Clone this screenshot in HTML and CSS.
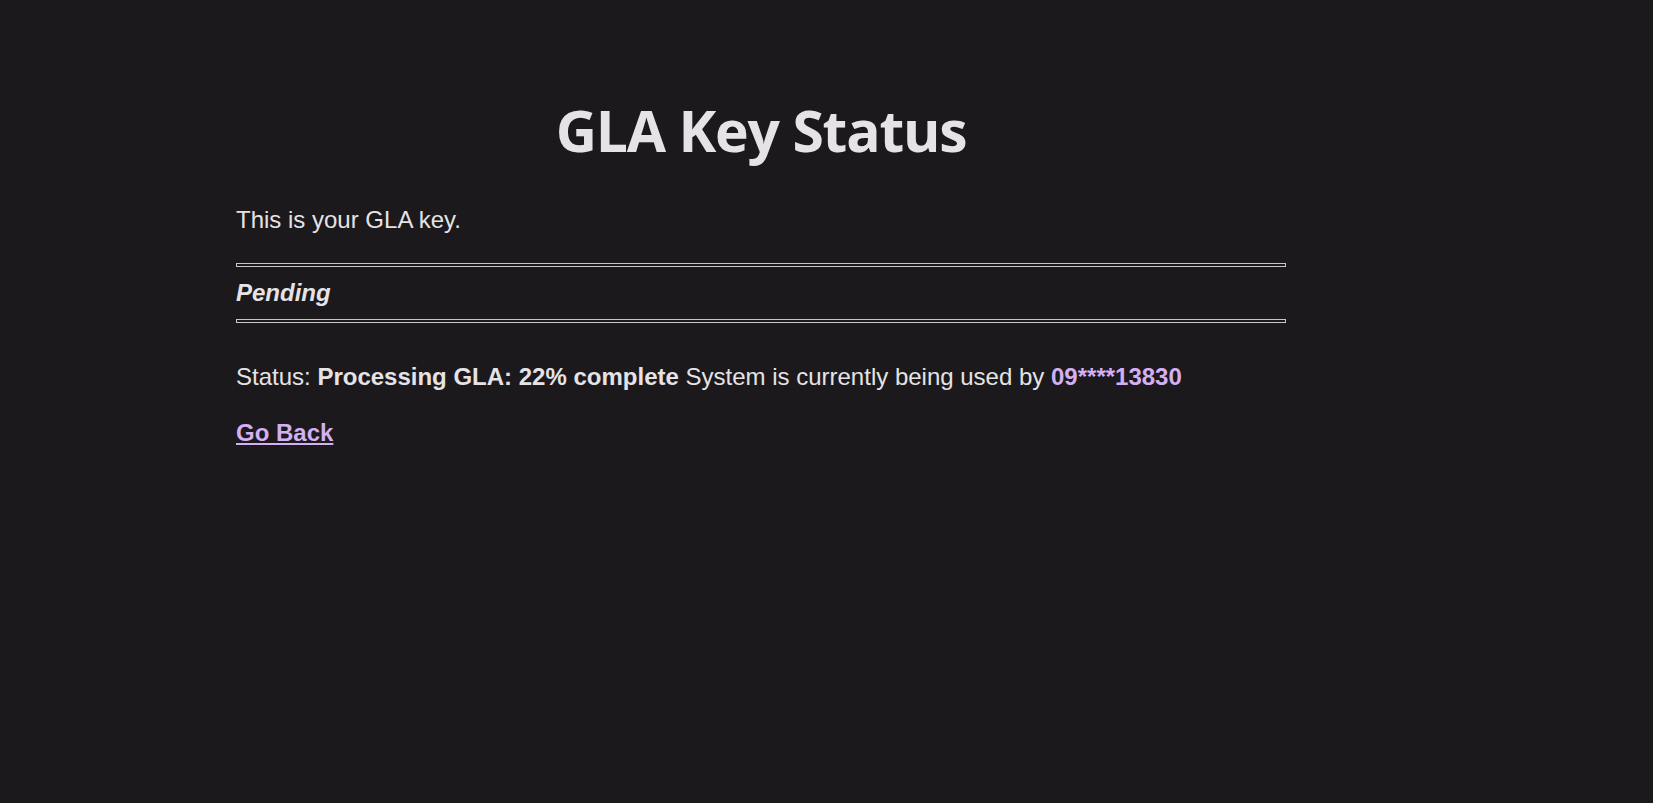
FILE: index.html
```html
<!DOCTYPE html>
<html lang="en">
<head>
<meta charset="utf-8">
<title>GLA Key Status</title>
<link rel="stylesheet" href="styles.css">
</head>
<body>
<main class="page">
  <h1 class="title">GLA Key Status</h1>
  <p class="intro">This is your GLA key.</p>
  <hr class="rule">
  <p class="key"><strong><em>Pending</em></strong></p>
  <hr class="rule rule-bottom">
  <p class="status">Status: <strong>Processing GLA: 22% complete</strong> System is currently being used by <strong class="user">09****13830</strong></p>
  <p class="back"><a href="#" class="back-link">Go Back</a></p>
</main>
</body>
</html>
```
FILE: styles.css
```css
html, body {
  margin: 0;
  padding: 0;
  background: #1b191c;
}

body {
  color: #e6e3e6;
  font-family: "Liberation Sans", Arial, sans-serif;
  font-size: 24px;
}

.page {
  width: 1050px;
  margin-left: 236px;
  padding-top: 96px;
}

.title {
  margin: 0;
  text-align: center;
  font-family: "Open Sans", sans-serif;
  font-weight: 700;
  font-size: 57px;
  line-height: 1.2;
  letter-spacing: -1.2px;
  color: #e6e3e6;
}

.intro {
  margin: 0;
  padding-top: 42px;
  line-height: 27.6px;
}

.rule {
  margin: 29px 0 0 0;
  border: 1px solid #c8c6c9;
  background: transparent;
  box-sizing: border-box;
  height: 4px;
}

.rule-bottom {
  margin-top: 12px;
}

.key {
  margin: 12px 0 0 0;
  line-height: 27.6px;
}

.status {
  margin: 40px 0 0 0;
  line-height: 27.6px;
}

.user {
  color: #d2b0f2;
}

.back {
  margin: 29px 0 0 0;
  line-height: 27.6px;
}

.back-link {
  color: #d2b0f2;
  font-weight: 700;
  text-decoration: underline;
}
```
